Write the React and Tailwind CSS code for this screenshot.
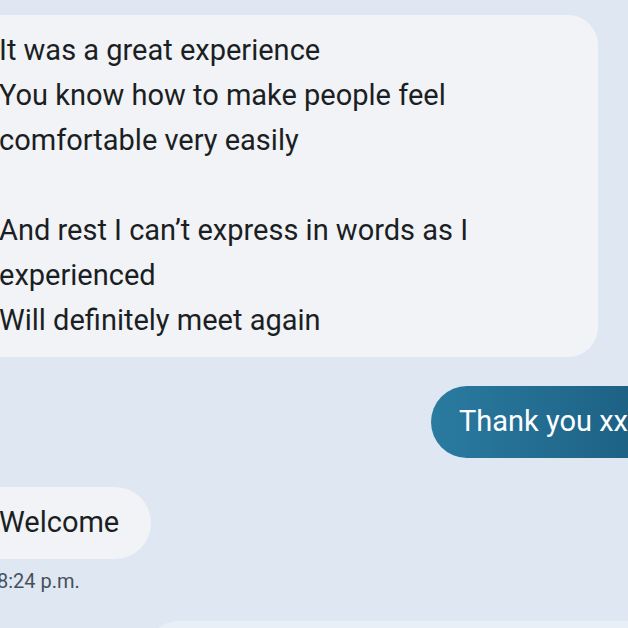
export default function App() {
  return (
    <div
      className="w-[628px] h-[628px] overflow-hidden bg-[#dfe8f2] relative"
      style={{ fontFamily: 'Roboto, "Noto Sans", sans-serif' }}
    >
      <div className="flex flex-col pt-[15px]">
        {/* incoming long message */}
        <div className="ml-[-40px] w-[638px] rounded-[30px] bg-[#f1f3f6] pl-[39px] pr-6 pt-[13px] pb-[14px] text-[29px] leading-[45px] text-[#1b1f24]">
          <div>It was a great experience</div>
          <div>You know how to make people feel</div>
          <div>comfortable very easily</div>
          <div>&nbsp;</div>
          <div>And rest I can’t express in words as I</div>
          <div>experienced</div>
          <div>Will definitely meet again</div>
        </div>

        {/* outgoing */}
        <div className="flex justify-end mt-[29px] mr-[-40px]">
          <div className="h-[72px] rounded-full bg-gradient-to-r from-[#2a7ba0] to-[#1b5d80] pl-[28px] pr-[40px] flex items-center text-[29px] text-white">
            Thank you xx
          </div>
        </div>

        {/* incoming welcome */}
        <div className="flex mt-[29px]">
          <div className="ml-[-40px] h-[72px] rounded-full bg-[#f1f3f6] pl-[39px] pr-[32px] flex items-center text-[29px] text-[#1b1f24]">
            Welcome
          </div>
        </div>
        <div className="ml-[-3px] mt-[10px] text-[20px] leading-[24px] text-[#46515c]">8:24 p.m.</div>

        <div className="ml-[148px] mt-[28px] h-[60px] rounded-tl-[30px] bg-[#e9eff6]" />
      </div>
    </div>
  );
}
